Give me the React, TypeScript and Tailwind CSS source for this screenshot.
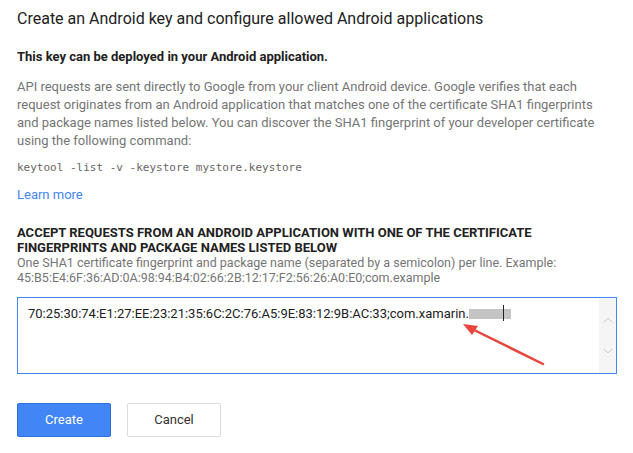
import { ChevronUp, ChevronDown } from 'lucide-react';

export default function App() {
  return (
    <div className="min-h-screen bg-white px-[17px] pt-[7px] font-['Roboto',sans-serif]">
      <div className="w-[590px]">
        <h1 className="text-[16px] leading-[24px] text-[#212121] font-normal">
          Create an Android key and configure allowed Android applications
        </h1>

        <p className="mt-[17px] text-[13px] leading-[18px] font-bold text-[#212121]">
          This key can be deployed in your Android application.
        </p>

        <p className="mt-[12px] text-[13px] leading-[18px] text-[#757575]">
          API requests are sent directly to Google from your client Android device. Google verifies that each
          request originates from an Android application that matches one of the certificate SHA1 fingerprints
          and package names listed below. You can discover the SHA1 fingerprint of your developer certificate
          using the following command:
        </p>

        <p className="mt-[9px] font-['DejaVu_Sans_Mono',monospace] text-[11px] leading-[18px] text-[#666]">
          keytool -list -v -keystore mystore.keystore
        </p>

        <a href="#" className="mt-[9px] block text-[13px] leading-[18px] text-[#4285f4]">
          Learn more
        </a>

        {/* Allowed apps */}
        <h2 className="mt-[21px] text-[13px] leading-[15px] font-bold text-[#212121]">
          ACCEPT REQUESTS FROM AN ANDROID APPLICATION WITH ONE OF THE CERTIFICATE FINGERPRINTS AND PACKAGE NAMES LISTED BELOW
        </h2>
        <p className="text-[12.5px] leading-[15px] text-[#757575]">
          One SHA1 certificate fingerprint and package name (separated by a semicolon) per line. Example:
          45:B5:E4:6F:36:AD:0A:98:94:B4:02:66:2B:12:17:F2:56:26:A0:E0;com.example
        </p>
      </div>

      <div className="relative mt-[12px] flex h-[77px] w-[600px] border border-[#4285f4]">
        <div className="flex-1 pl-[10px] pt-[7px] text-[13px] leading-[18px] text-[#212121]">
          <span>70:25:30:74:E1:27:EE:23:21:35:6C:2C:76:A5:9E:83:12:9B:AC:33;com.xamarin.</span>
          <span className="relative inline-block h-[10px] w-[42px] bg-[#c4c4c4] align-[-1px]">
            <span className="absolute left-[34px] top-[-4px] h-[16px] w-px bg-[#212121]" />
          </span>
        </div>
        <div className="flex w-[17px] flex-col items-center justify-between bg-[#f5f5f5] py-[14px] text-[#c8c8c8]">
          <ChevronUp size={16} strokeWidth={1.5} />
          <ChevronDown size={16} strokeWidth={1.5} />
        </div>

        {/* annotation arrow */}
        <svg className="absolute left-[440px] top-[22px]" width="90" height="50" viewBox="0 0 90 50">
          <line x1="85" y1="44" x2="10" y2="7" stroke="#e8453c" strokeWidth="2.5" strokeLinecap="round" />
          <polygon points="5,4 20,6 14,15" fill="#e8453c" />
        </svg>
      </div>

      <div className="mt-[29px] flex gap-[16px]">
        <button className="h-[34px] w-[94px] rounded-[2px] border border-[#2a6fde] bg-[#4285f4] text-[13px] text-white">
          Create
        </button>
        <button className="h-[34px] w-[94px] rounded-[2px] border border-[#dcdcdc] bg-white text-[13px] text-[#333]">
          Cancel
        </button>
      </div>
    </div>
  );
}
